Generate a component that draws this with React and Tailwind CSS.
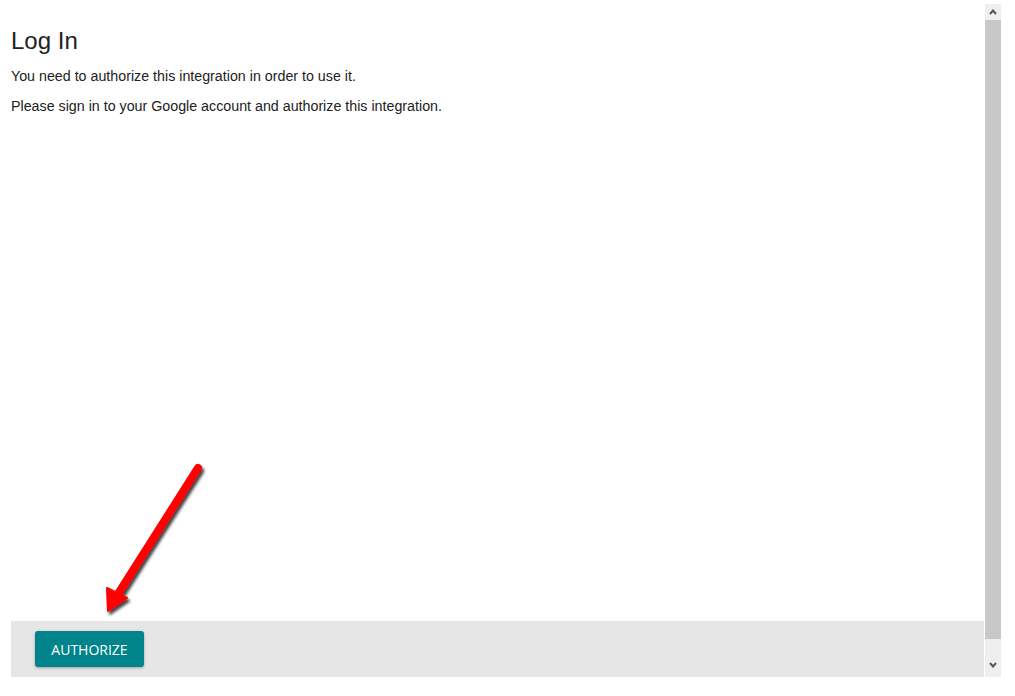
import React from 'react';

const Arrow = () => (
  <svg className="absolute left-0 top-0 pointer-events-none" width="1015" height="696">
    <defs>
      <filter id="sh" x="-20%" y="-20%" width="140%" height="140%">
        <feDropShadow dx="2" dy="3" stdDeviation="1.5" floodColor="#000" floodOpacity="0.75" />
      </filter>
    </defs>
    <g filter="url(#sh)">
      <line x1="198" y1="468" x2="118" y2="594" stroke="#ff0000" strokeWidth="8" strokeLinecap="round" />
      <polygon points="108,611 107,588 127,598" fill="#ff0000" stroke="#ff0000" strokeWidth="2" strokeLinejoin="round" />
    </g>
  </svg>
);

export default function App() {
  return (
    <div className="relative w-[1015px] h-[696px] bg-white overflow-hidden" style={{ fontFamily: '"Liberation Sans", Arial, sans-serif' }}>
      <div className="flex h-[677px]">
        <div className="flex flex-col w-[985px]">
          <div className="px-[11px] pt-[27px] text-[#222]">
            <h1 className="text-[24px] leading-[28px]">Log In</h1>
            <p className="text-[14.25px] leading-[16px] mt-[13px]">You need to authorize this integration in order to use it.</p>
            <p className="text-[14.25px] leading-[16px] mt-[14px]">Please sign in to your Google account and authorize this integration.</p>
          </div>
          <div className="flex-1" />
          <div className="ml-[11px] mr-[1px] h-[56px] bg-[#e6e6e6] px-[24px] py-[10px]">
            <button
              className="h-[36px] w-[109px] rounded-[3px] bg-[#00838a] text-white text-[14px] shadow-[0_1px_3px_rgba(0,0,0,0.3)]"
              style={{ fontFamily: '"Open Sans", sans-serif' }}
            >
              AUTHORIZE
            </button>
          </div>
        </div>
        <div className="w-[16px] mt-[4px] flex flex-col bg-[#efefef]">
          <div className="h-[16px] flex items-center justify-center">
            <svg width="8" height="6" viewBox="0 0 8 6"><path d="M1 5 L4 1.5 L7 5" fill="none" stroke="#555" strokeWidth="2" /></svg>
          </div>
          <div className="flex-1 bg-[#c8c8c8] mb-[38px]" />
          <div className="h-[16px] flex items-center justify-center -mt-[20px] mb-[4px]">
            <svg width="8" height="6" viewBox="0 0 8 6"><path d="M1 1 L4 4.5 L7 1" fill="none" stroke="#555" strokeWidth="2" /></svg>
          </div>
        </div>
      </div>
      <Arrow />
    </div>
  );
}
